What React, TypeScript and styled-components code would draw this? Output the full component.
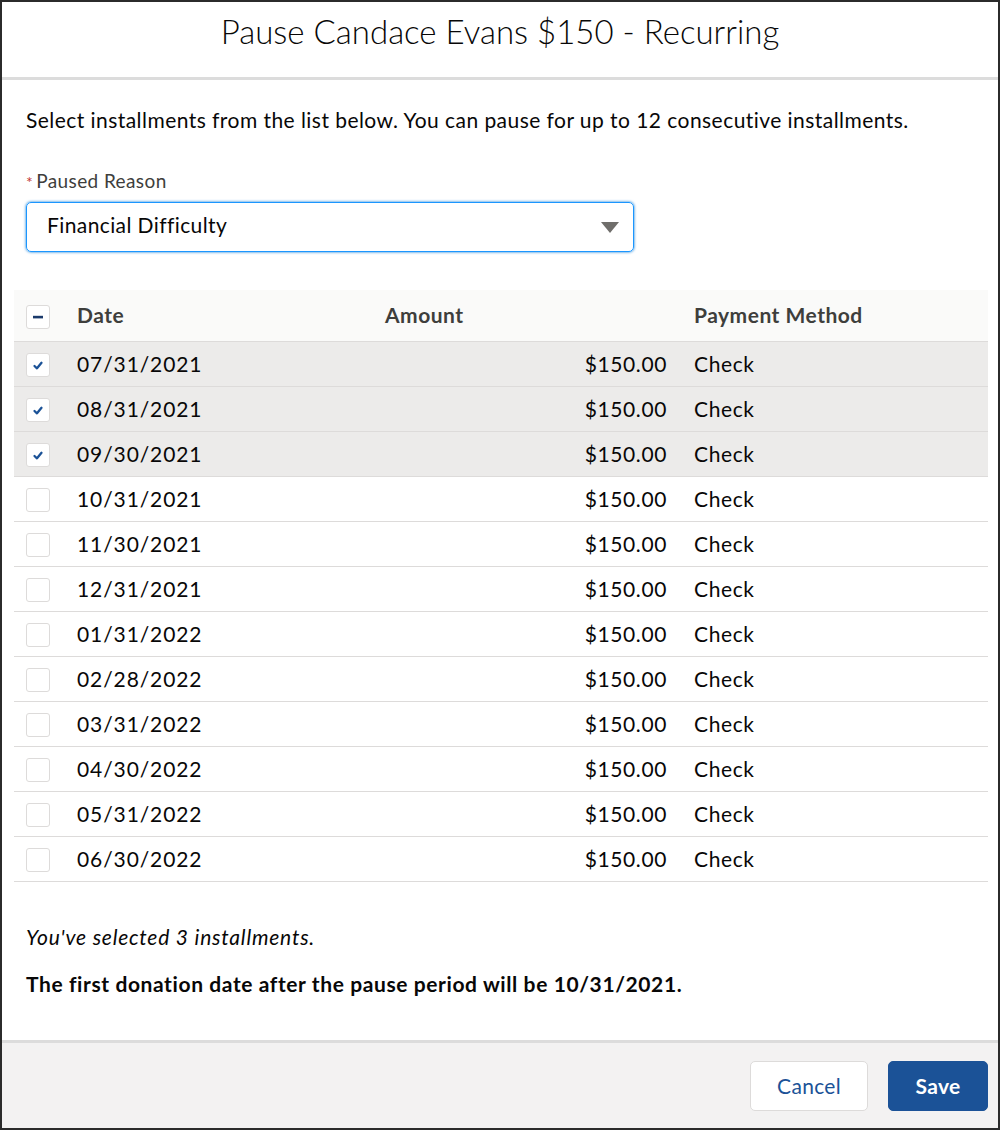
import React from 'react';
import styled, { createGlobalStyle } from 'styled-components';

const GlobalStyle = createGlobalStyle`
  html, body {
    margin: 0;
    padding: 0;
    background: #ffffff;
  }
  body {
    font-family: Lato, "Noto Sans", sans-serif;
    color: #080707;
  }
`;

const Modal = styled.div`
  box-sizing: border-box;
  width: 1000px;
  height: 1130px;
  border: 2px solid #2b2b2b;
  display: flex;
  flex-direction: column;
  background: #fff;
`;

const Header = styled.div`
  height: 78px;
  display: flex;
  align-items: center;
  justify-content: center;
  border-bottom: 3px solid #dcdcdc;
  padding-bottom: 18px;
  box-sizing: border-box;
`;

const Title = styled.h2`
  margin: 0;
  font-weight: 300;
  font-size: 33px;
  color: #080707;
`;

const Body = styled.div`
  flex: 1;
  padding: 26px 10px 0 12px;
`;

const Intro = styled.p`
  margin: 0 0 0 12px;
  font-size: 21px;
  letter-spacing: 0.45px;
  line-height: 28px;
`;

const Field = styled.div`
  margin: 36px 0 0 12px;
  width: 608px;
`;

const Label = styled.div`
  font-size: 19px;
  letter-spacing: 0.4px;
  line-height: 22px;
  color: #3e3e3c;
  margin-bottom: 9px;
  span {
    color: #c23934;
    margin-right: 3px;
    font-size: 16px;
  }
`;

const Select = styled.div`
  height: 50px;
  box-sizing: border-box;
  border: 1px solid #1b96ff;
  box-shadow: 0 0 3px #0176d3;
  border-radius: 5px;
  display: flex;
  align-items: center;
  justify-content: space-between;
  padding: 0 14px 5px 20px;
  font-size: 21px;
  letter-spacing: 0.4px;
`;

const Caret = styled.div`
  width: 0;
  height: 0;
  margin-top: 5px;
  border-left: 9px solid transparent;
  border-right: 9px solid transparent;
  border-top: 11px solid #706e6b;
`;

const Table = styled.div`
  margin-top: 38px;
  width: 974px;
`;

const Row = styled.div<{ $head?: boolean; $selected?: boolean }>`
  display: grid;
  grid-template-columns: 63px 308px 282px 1fr;
  align-items: center;
  height: ${p => (p.$head ? '52px' : '45px')};
  padding-bottom: 2px;
  box-sizing: border-box;
  border-bottom: 1px solid #dddbda;
  background: ${p => (p.$head ? '#fafaf9' : p.$selected ? '#ecebea' : '#ffffff')};
  font-size: 21px;
  font-weight: ${p => (p.$head ? 700 : 400)};
  color: ${p => (p.$head ? '#3e3e3c' : '#080707')};
  letter-spacing: ${p => (p.$head ? '0.5px' : '0.6px')};
`;

const BoxCell = styled.div`
  padding-left: 12px;
  padding-top: 4px;
  display: flex;
  align-items: center;
`;

const Box = styled.div`
  width: 24px;
  height: 24px;
  box-sizing: border-box;
  border: 1px solid #dddbda;
  border-radius: 3px;
  background: #fff;
  display: flex;
  align-items: center;
  justify-content: center;
`;

const DateCell = styled.div<{ $head?: boolean }>`
  letter-spacing: ${p => (p.$head ? '0.5px' : '0.9px')};
`;

const AmountCell = styled.div<{ $head?: boolean }>`
  text-align: ${p => (p.$head ? 'left' : 'right')};
`;

const MethodCell = styled.div`
  padding-left: 27px;
`;

const Summary = styled.div`
  margin: 42px 0 0 12px;
`;

const Selected = styled.p`
  margin: 0;
  font-style: italic;
  font-size: 21px;
  letter-spacing: 0.8px;
`;

const FirstDate = styled.p`
  margin: 22px 0 0;
  font-weight: 700;
  font-size: 21px;
  letter-spacing: 0.6px;
`;

const Footer = styled.div`
  height: 88px;
  box-sizing: border-box;
  background: #f3f2f2;
  border-top: 3px solid #dcdcdc;
  display: flex;
  justify-content: flex-end;
  align-items: center;
  gap: 20px;
  padding: 0 10px 0 0;
`;

const Button = styled.button<{ $brand?: boolean }>`
  height: 50px;
  border-radius: 5px;
  font-family: Lato, sans-serif;
  font-size: 21px;
  letter-spacing: 0.3px;
  padding: 0 26px;
  border: 1px solid ${p => (p.$brand ? '#1b5297' : '#dddbda')};
  background: ${p => (p.$brand ? '#1b5297' : '#ffffff')};
  color: ${p => (p.$brand ? '#ffffff' : '#1b5297')};
  font-weight: ${p => (p.$brand ? 700 : 400)};
  min-width: ${p => (p.$brand ? '100px' : '118px')};
`;

const rows = [
  ['07/31/2021', true],
  ['08/31/2021', true],
  ['09/30/2021', true],
  ['10/31/2021', false],
  ['11/30/2021', false],
  ['12/31/2021', false],
  ['01/31/2022', false],
  ['02/28/2022', false],
  ['03/31/2022', false],
  ['04/30/2022', false],
  ['05/31/2022', false],
  ['06/30/2022', false],
] as const;

const CheckMark = () => (
  <svg width="14" height="14" viewBox="0 0 14 14">
    <path d="M3.5 8 L6 10.3 L10.5 4.8" fill="none" stroke="#1b5297" strokeWidth="2.3" strokeLinecap="round" strokeLinejoin="round" />
  </svg>
);

const Minus = () => (
  <svg width="14" height="14" viewBox="0 0 14 14">
    <rect x="2" y="5.8" width="10" height="2.6" fill="#1b3a6b" />
  </svg>
);

export default function App() {
  return (
    <Modal>
      <GlobalStyle />
      <Header>
        <Title>Pause Candace Evans $150 - Recurring</Title>
      </Header>
      <Body>
        <Intro>
          Select installments from the list below. You can pause for up to 12 consecutive installments.
        </Intro>
        <Field>
          <Label>
            <span>*</span>Paused Reason
          </Label>
          <Select>
            Financial Difficulty
            <Caret />
          </Select>
        </Field>
        <Table>
          <Row $head>
            <BoxCell>
              <Box>
                <Minus />
              </Box>
            </BoxCell>
            <DateCell $head>Date</DateCell>
            <AmountCell $head>Amount</AmountCell>
            <MethodCell>Payment Method</MethodCell>
          </Row>
          {rows.map(([date, sel]) => (
            <Row key={date} $selected={sel}>
              <BoxCell>
                <Box>{sel && <CheckMark />}</Box>
              </BoxCell>
              <DateCell>{date}</DateCell>
              <AmountCell>$150.00</AmountCell>
              <MethodCell>Check</MethodCell>
            </Row>
          ))}
        </Table>
        <Summary>
          <Selected>You've selected 3 installments.</Selected>
          <FirstDate>The first donation date after the pause period will be 10/31/2021.</FirstDate>
        </Summary>
      </Body>
      <Footer>
        <Button>Cancel</Button>
        <Button $brand>Save</Button>
      </Footer>
    </Modal>
  );
}
